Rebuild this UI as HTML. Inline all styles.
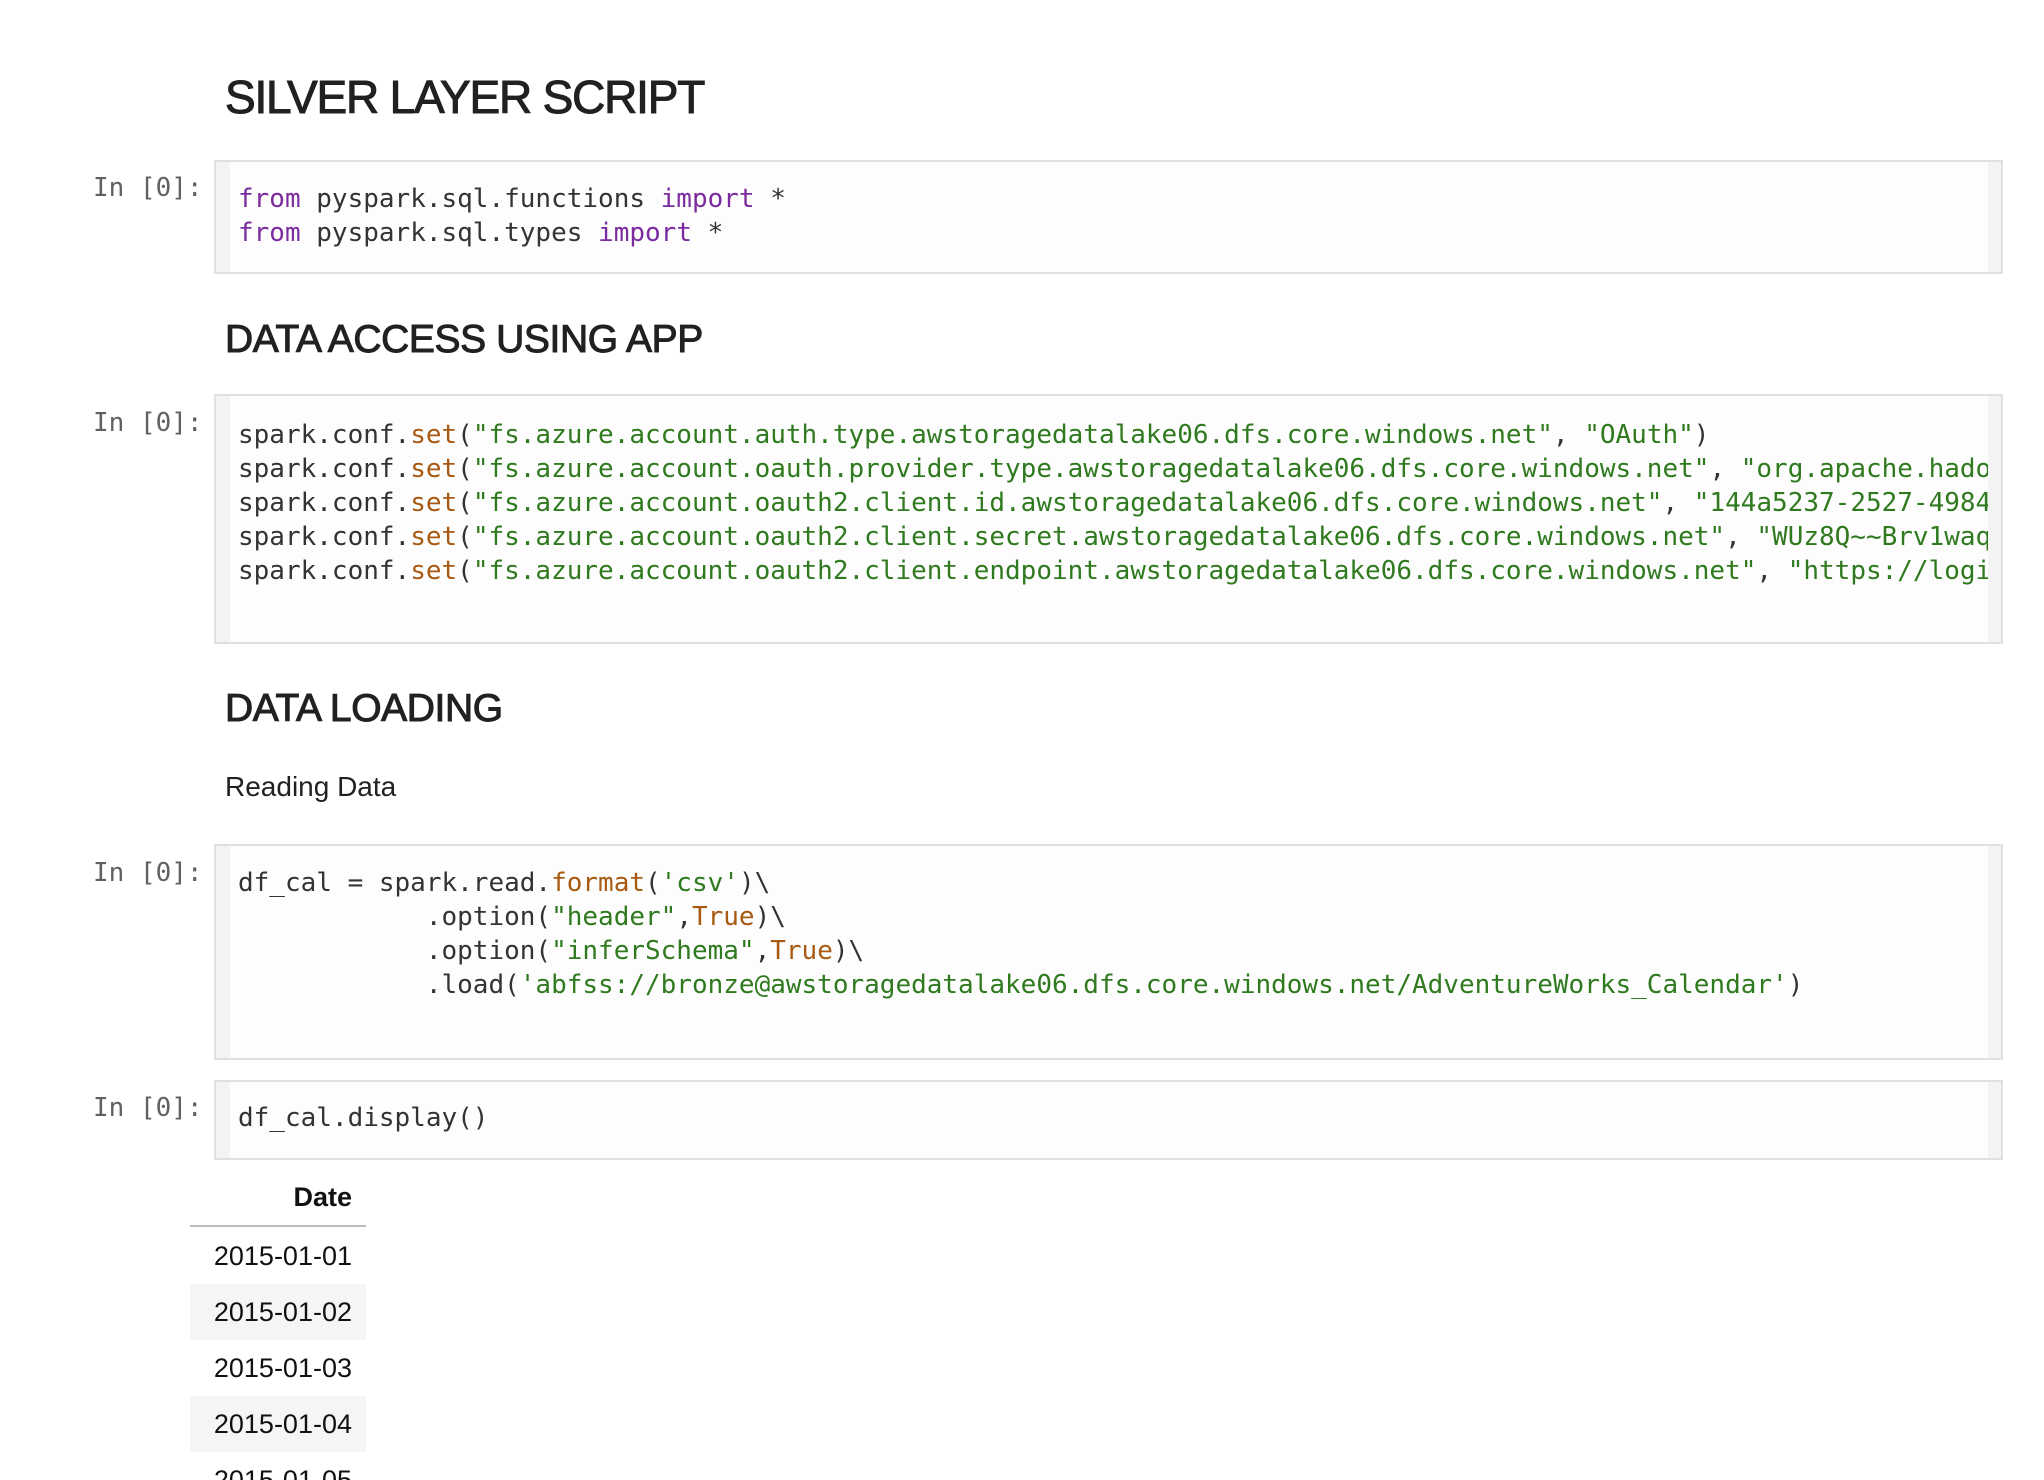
<!DOCTYPE html>
<html><head><meta charset="utf-8"><style>
html,body{margin:0;padding:0;background:#fff;width:2044px;height:1480px;overflow:hidden;position:relative}
.a{position:absolute;white-space:pre}
.h{font-family:"Liberation Sans",sans-serif;color:#212121;-webkit-text-stroke:1px #212121}
.m{font-family:"DejaVu Sans Mono","Liberation Mono",monospace;font-size:26px;line-height:34px}
.in{color:#616161;left:93px}
.box{position:absolute;left:214px;width:1785px;border:2px solid #e0e0e0;background:#fdfdfd;overflow:hidden}
.box .g{position:absolute;left:0;top:0;bottom:0;width:14px;background:#f3f3f3}
.box .s{position:absolute;right:0;top:0;bottom:0;width:13px;background:#f3f3f3}
.code{position:absolute;left:22px;right:13px;overflow:hidden;color:#333;white-space:pre}
.k{color:#7b2b9f}.o{color:#a85a12}.str{color:#2f7a1f}
.d{position:absolute;left:190px;width:176px;height:56px;font-family:"Liberation Sans",sans-serif;font-size:27px;line-height:56px;text-align:right;color:#111;box-sizing:border-box;padding-right:14px}
</style></head><body>
<div class="a h" style="left:225px;top:74px;font-size:46px;line-height:46px;letter-spacing:-1.2px">SILVER LAYER SCRIPT</div>

<div class="a m in" style="top:171px">In [0]:</div>
<div class="box" style="top:160px;height:110px"><div class="g"></div><div class="s"></div>
<div class="code m" style="top:20px"><span class="k">from</span> pyspark.sql.functions <span class="k">import</span> *
<span class="k">from</span> pyspark.sql.types <span class="k">import</span> *</div></div>

<div class="a h" style="left:225px;top:320px;font-size:39px;line-height:39px;letter-spacing:-0.4px">DATA ACCESS USING APP</div>

<div class="a m in" style="top:406px">In [0]:</div>
<div class="box" style="top:394px;height:246px"><div class="g"></div><div class="s"></div>
<div class="code m" style="top:22px">spark.conf.<span class="o">set</span>(<span class="str">"fs.azure.account.auth.type.awstoragedatalake06.dfs.core.windows.net"</span>, <span class="str">"OAuth"</span>)
spark.conf.<span class="o">set</span>(<span class="str">"fs.azure.account.oauth.provider.type.awstoragedatalake06.dfs.core.windows.net"</span>, <span class="str">"org.apache.hadoop.fs.azurebfs.oauth2.ClientCredsTokenProvider"</span>)
spark.conf.<span class="o">set</span>(<span class="str">"fs.azure.account.oauth2.client.id.awstoragedatalake06.dfs.core.windows.net"</span>, <span class="str">"144a5237-2527-4984-0000-000000000000"</span>)
spark.conf.<span class="o">set</span>(<span class="str">"fs.azure.account.oauth2.client.secret.awstoragedatalake06.dfs.core.windows.net"</span>, <span class="str">"WUz8Q~~Brv1waqxxxxxxxxxx"</span>)
spark.conf.<span class="o">set</span>(<span class="str">"fs.azure.account.oauth2.client.endpoint.awstoragedatalake06.dfs.core.windows.net"</span>, <span class="str">"https://login.microsoftonline.com/xxxx/oauth2/token"</span>)</div></div>

<div class="a h" style="left:225px;top:689px;font-size:39px;line-height:39px;letter-spacing:-0.4px">DATA LOADING</div>
<div class="a" style="left:225px;top:773px;font-family:'Liberation Sans',sans-serif;font-size:28px;line-height:28px;color:#212121">Reading Data</div>

<div class="a m in" style="top:856px">In [0]:</div>
<div class="box" style="top:844px;height:212px"><div class="g"></div><div class="s"></div>
<div class="code m" style="top:20px">df_cal = spark.read.<span class="o">format</span>(<span class="str">'csv'</span>)\
            .option(<span class="str">"header"</span>,<span class="o">True</span>)\
            .option(<span class="str">"inferSchema"</span>,<span class="o">True</span>)\
            .load(<span class="str">'abfss://bronze@awstoragedatalake06.dfs.core.windows.net/AdventureWorks_Calendar'</span>)</div></div>

<div class="a m in" style="top:1091px">In [0]:</div>
<div class="box" style="top:1080px;height:76px"><div class="g"></div><div class="s"></div>
<div class="code m" style="top:19px">df_cal.display()</div></div>

<div class="a" style="left:190px;top:1184px;width:162px;text-align:right;font-family:'Liberation Sans',sans-serif;font-weight:bold;font-size:27px;line-height:27px;color:#111">Date</div>
<div class="a" style="left:190px;top:1225px;width:176px;height:2px;background:#bdbdbd"></div>
<div class="d" style="top:1228px">2015-01-01</div>
<div class="d" style="top:1284px;background:#f5f5f5">2015-01-02</div>
<div class="d" style="top:1340px">2015-01-03</div>
<div class="d" style="top:1396px;background:#f5f5f5">2015-01-04</div>
<div class="d" style="top:1452px">2015-01-05</div>
</body></html>
